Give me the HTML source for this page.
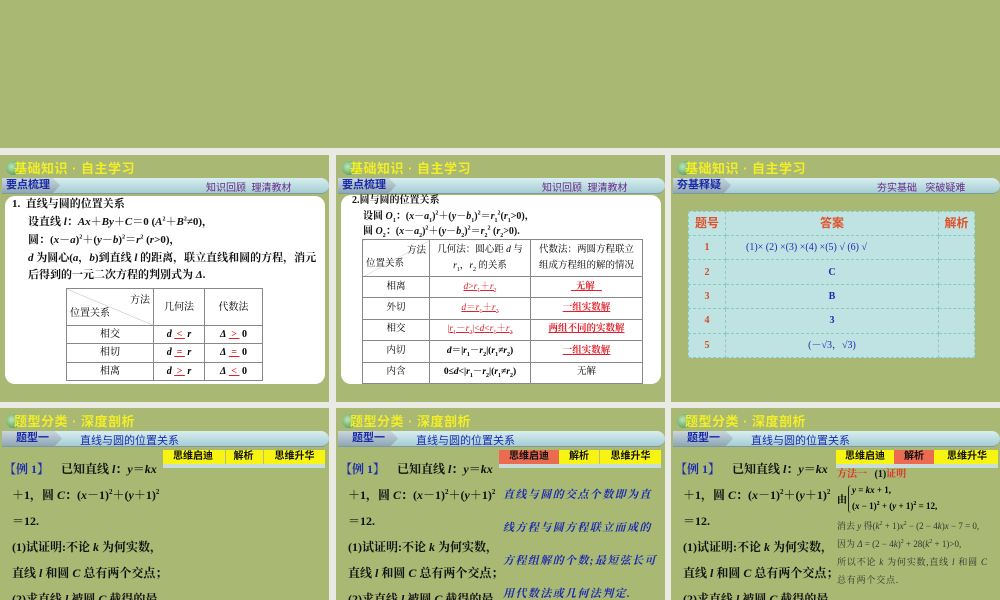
<!DOCTYPE html>
<html><head><meta charset="utf-8"><style>
*{margin:0;padding:0;box-sizing:border-box}
body{width:1000px;height:600px;background:#e9eae3;position:relative;overflow:hidden;font-family:"Liberation Serif","Noto Serif CJK SC",serif;}
sup,sub{line-height:0}
.a{position:absolute;white-space:nowrap;line-height:14px}
.s{position:absolute;background:#a9b872;overflow:hidden}
.ti{position:absolute;left:6px;top:3px;font:bold 13px "Liberation Sans","Noto Sans CJK SC",sans-serif;color:#f2ee27;letter-spacing:0.5px}
.ti i{display:inline-block;width:14px;height:14px;border-radius:50%;background:radial-gradient(circle at 40% 40%,#bfe6b0,#3b8a4a);vertical-align:-2px;margin-right:-6px}
.bar{position:absolute;left:2px;right:0;top:23px;height:16px;background:linear-gradient(#d8eef0,#a5cdd3);border-radius:0 9px 9px 0;border-bottom:1px solid #7d9aa0}
.tab{position:absolute;left:0;top:0;height:15px;width:58px;background:linear-gradient(#c9d6de,#8ea6b4);clip-path:polygon(0 0,88% 0,100% 50%,88% 100%,0 100%);font:bold 11px "Liberation Sans","Noto Sans CJK SC",sans-serif;color:#1a2aa8;padding-left:4px;line-height:15px}
.bt{position:absolute;top:1px;font:10px "Liberation Sans","Noto Sans CJK SC",sans-serif;color:#6a2a8a}
.box{position:absolute;left:5px;right:4px;background:#fff;border-radius:10px}
.tx{font-size:11px;font-weight:bold;color:#111}
table{border-collapse:collapse;position:absolute;font-size:10px;font-weight:bold}
td{border:1px solid #888;text-align:center;line-height:13px}
.r{color:#e0202a}
.bl{color:#1b2cb0}
.ts{font:11px "Liberation Sans","Noto Sans CJK SC",sans-serif;color:#1b2cb0}
.yb{position:absolute;top:42px;height:14px;background:#f7f312;font:bold 10px "Liberation Sans","Noto Sans CJK SC",sans-serif;color:#111;line-height:14px}
.yb span{position:absolute;top:0;text-align:center;height:14px}
.q{font-size:12px;font-weight:bold;color:#111}
</style></head><body>
<div class="s" style="left:0;top:0;width:1000px;height:148px"></div>

<!-- slide 1 -->
<div class="s" style="left:0;top:155px;width:329px;height:247px">
<div class="ti"><i></i>基础知识 · 自主学习</div>
<div class="bar"><div class="tab">要点梳理</div><div class="bt" style="left:204px">知识回顾&nbsp; 理清教材</div></div>
<div class="box" style="top:41px;height:188px"></div>
<div class="a tx" style="left:12px;top:42px">1.&nbsp; 直线与圆的位置关系</div>
<div class="a tx" style="left:28px;top:60px">设直线 <i>l</i>：<i>Ax</i>＋<i>By</i>＋<i>C</i>＝0 (<i>A</i><sup style="font-size:6px">2</sup>＋<i>B</i><sup style="font-size:6px">2</sup>≠0)，</div>
<div class="a tx" style="left:28px;top:78px">圆：(<i>x</i>－<i>a</i>)<sup style="font-size:6px">2</sup>＋(<i>y</i>－<i>b</i>)<sup style="font-size:6px">2</sup>＝<i>r</i><sup style="font-size:6px">2</sup> (<i>r</i>&gt;0)，</div>
<div class="a tx" style="left:28px;top:96px"><i>d</i> 为圆心(<i>a</i>，<i>b</i>)到直线 <i>l</i> 的距离，联立直线和圆的方程，消元</div>
<div class="a tx" style="left:28px;top:113px">后得到的一元二次方程的判别式为 <i>Δ</i>.</div>
<table style="left:66px;top:133px;width:197px;height:93px;background:#fff">
<tr style="height:37px"><td style="width:87px;text-align:left;font-weight:normal;padding:0 3px;background:linear-gradient(to top right,#fff 49.5%,#bbb 50%,#fff 51%)"><div style="text-align:right">方法</div><div>位置关系</div></td><td style="width:51px;font-weight:normal">几何法</td><td style="font-weight:normal">代数法</td></tr>
<tr><td style="font-weight:normal">相交</td><td><i>d</i> <u class="r">&nbsp;&lt;&nbsp;</u> <i>r</i></td><td><i>Δ</i> <u class="r">&nbsp;&gt;&nbsp;</u> 0</td></tr>
<tr><td style="font-weight:normal">相切</td><td><i>d</i> <u class="r">&nbsp;=&nbsp;</u> <i>r</i></td><td><i>Δ</i> <u class="r">&nbsp;=&nbsp;</u> 0</td></tr>
<tr><td style="font-weight:normal">相离</td><td><i>d</i> <u class="r">&nbsp;&gt;&nbsp;</u> <i>r</i></td><td><i>Δ</i> <u class="r">&nbsp;&lt;&nbsp;</u> 0</td></tr>
</table>
</div>

<!-- slide 2 -->
<div class="s" style="left:336px;top:155px;width:329px;height:247px">
<div class="ti"><i></i>基础知识 · 自主学习</div>
<div class="bar"><div class="tab">要点梳理</div><div class="bt" style="left:204px">知识回顾&nbsp; 理清教材</div></div>
<div class="box" style="top:40px;height:189px"></div>
<div class="a tx" style="left:16px;top:39px;font-size:10px">2.圆与圆的位置关系</div>
<div class="a tx" style="left:27px;top:55px;font-size:10px">设圆 <i>O</i><sub style="font-size:6px">1</sub>：(<i>x</i>－<i>a</i><sub style="font-size:6px">1</sub>)<sup style="font-size:6px">2</sup>＋(<i>y</i>－<i>b</i><sub style="font-size:6px">1</sub>)<sup style="font-size:6px">2</sup>＝<i>r</i><sub style="font-size:6px">1</sub><sup style="font-size:6px">2</sup>(<i>r</i><sub style="font-size:6px">1</sub>&gt;0)，</div>
<div class="a tx" style="left:27px;top:70px;font-size:10px">圆 <i>O</i><sub style="font-size:6px">2</sub>：(<i>x</i>－<i>a</i><sub style="font-size:6px">2</sub>)<sup style="font-size:6px">2</sup>＋(<i>y</i>－<i>b</i><sub style="font-size:6px">2</sub>)<sup style="font-size:6px">2</sup>＝<i>r</i><sub style="font-size:6px">2</sub><sup style="font-size:6px">2</sup> (<i>r</i><sub style="font-size:6px">2</sub>&gt;0).</div>
<table style="left:26px;top:84px;width:281px;height:145px;background:#fff;font-size:9.5px">
<tr style="height:37px"><td style="width:67px;font-weight:normal;text-align:left;padding:0 3px;background:linear-gradient(to bottom right,#fff 49.5%,#ccc 50%,#fff 51%)"><div style="text-align:right">方法</div><div>位置关系</div></td><td style="width:101px;font-weight:normal;line-height:16px">几何法：圆心距 <i>d</i> 与<br><i>r</i><sub style="font-size:6px">1</sub>，<i>r</i><sub style="font-size:6px">2</sub> 的关系</td><td style="font-weight:normal;line-height:16px">代数法：两圆方程联立<br>组成方程组的解的情况</td></tr>
<tr><td style="font-weight:normal">相离</td><td class="r" style="font-weight:normal"><u><i>d</i>&gt;<i>r</i><sub style="font-size:6px">1</sub>＋<i>r</i><sub style="font-size:6px">2</sub></u></td><td class="r"><u>&nbsp;&nbsp;无解&nbsp;&nbsp;&nbsp;</u></td></tr>
<tr><td style="font-weight:normal">外切</td><td class="r" style="font-weight:normal"><u><i>d</i>＝<i>r</i><sub style="font-size:6px">1</sub>＋<i>r</i><sub style="font-size:6px">2</sub></u></td><td class="r"><u>一组实数解</u></td></tr>
<tr><td style="font-weight:normal">相交</td><td class="r" style="font-weight:normal"><u>|<i>r</i><sub style="font-size:6px">1</sub>－<i>r</i><sub style="font-size:6px">2</sub>|&lt;<i>d</i>&lt;<i>r</i><sub style="font-size:6px">1</sub>＋<i>r</i><sub style="font-size:6px">2</sub></u></td><td class="r"><u>两组不同的实数解</u></td></tr>
<tr><td style="font-weight:normal">内切</td><td><i>d</i>＝|<i>r</i><sub style="font-size:6px">1</sub>－<i>r</i><sub style="font-size:6px">2</sub>|(<i>r</i><sub style="font-size:6px">1</sub>≠<i>r</i><sub style="font-size:6px">2</sub>)</td><td class="r"><u>一组实数解</u></td></tr>
<tr><td style="font-weight:normal">内含</td><td>0≤<i>d</i>&lt;|<i>r</i><sub style="font-size:6px">1</sub>－<i>r</i><sub style="font-size:6px">2</sub>|(<i>r</i><sub style="font-size:6px">1</sub>≠<i>r</i><sub style="font-size:6px">2</sub>)</td><td style="font-weight:normal">无解</td></tr>
</table>
</div>

<!-- slide 3 -->
<div class="s" style="left:671px;top:155px;width:329px;height:247px">
<div class="ti"><i></i>基础知识 · 自主学习</div>
<div class="bar"><div class="tab">夯基释疑</div><div class="bt" style="left:204px">夯实基础&nbsp;&nbsp; 突破疑难</div></div>
<table style="left:17px;top:56px;width:287px;height:147px;background:#bfe3e2;font-size:10px">
<tr style="height:24px;color:#e0502a;font:bold 12px 'Liberation Sans','Noto Sans CJK SC',sans-serif"><td style="width:37px;border:1px dashed #8cb">题号</td><td style="border:1px dashed #8cb">答案</td><td style="width:36px;border:1px dashed #8cb">解析</td></tr>
<tr><td style="border:1px dashed #8cb;color:#d0502a">1</td><td class="bl" style="border:1px dashed #8cb;font-weight:normal;text-align:left;padding-left:20px">(1)× (2) ×(3) ×(4) ×(5) √ (6) √</td><td style="border:1px dashed #8cb"></td></tr>
<tr><td style="border:1px dashed #8cb;color:#d0502a">2</td><td class="bl" style="border:1px dashed #8cb">C</td><td style="border:1px dashed #8cb"></td></tr>
<tr><td style="border:1px dashed #8cb;color:#d0502a">3</td><td class="bl" style="border:1px dashed #8cb">B</td><td style="border:1px dashed #8cb"></td></tr>
<tr><td style="border:1px dashed #8cb;color:#d0502a">4</td><td class="bl" style="border:1px dashed #8cb">3</td><td style="border:1px dashed #8cb"></td></tr>
<tr><td style="border:1px dashed #8cb;color:#d0502a">5</td><td class="bl" style="border:1px dashed #8cb;font-weight:normal">(－√3，√3)</td><td style="border:1px dashed #8cb"></td></tr>
</table>
</div>

<!-- row 2 -->
<div class="s" style="left:0;top:408px;width:329px;height:192px">
<div class="ti"><i></i>题型分类 · 深度剖析</div>
<div class="bar"><div class="tab" style="width:60px;padding-left:14px">题型一</div><div class="ts a" style="left:78px;top:1px">直线与圆的位置关系</div></div>
<div class="yb" style="left:163px;width:162px"><span style="left:0;width:60px">思维启迪</span><span style="left:62px;width:36px;border-left:1px solid #bb8">解析</span><span style="left:100px;width:62px;border-left:1px solid #bb8">思维升华</span></div>
<div class="a" style="left:163px;top:56px;width:162px;height:4px;background:#c9dcdc"></div>
<div class="a q" style="left:4px;top:54px"><span class="bl">【例 1】</span>&nbsp;&nbsp;&nbsp; 已知直线 <i>l</i>：<i>y</i>＝<i>kx</i></div>
<div class="a q" style="left:12px;top:80px">＋1，圆 <i>C</i>：(<i>x</i>－1)<sup style="font-size:7px">2</sup>＋(<i>y</i>＋1)<sup style="font-size:7px">2</sup></div>
<div class="a q" style="left:12px;top:106px">＝12.</div>
<div class="a q" style="left:12px;top:132px">(1)试证明:不论 <i>k</i> 为何实数，</div>
<div class="a q" style="left:12px;top:158px">直线 <i>l</i> 和圆 <i>C</i> 总有两个交点；</div>
<div class="a q" style="left:12px;top:184px">(2)求直线 <i>l</i> 被圆 <i>C</i> 截得的最</div>
</div>

<div class="s" style="left:336px;top:408px;width:329px;height:192px">
<div class="ti"><i></i>题型分类 · 深度剖析</div>
<div class="bar"><div class="tab" style="width:60px;padding-left:14px">题型一</div><div class="ts a" style="left:78px;top:1px">直线与圆的位置关系</div></div>
<div class="yb" style="left:163px;width:162px"><span style="left:0;width:60px;background:#ec6a50">思维启迪</span><span style="left:62px;width:36px">解析</span><span style="left:100px;width:62px;border-left:1px solid #bb8">思维升华</span></div>
<div class="a" style="left:163px;top:56px;width:162px;height:4px;background:#c9dcdc"></div>
<div class="a q" style="left:4px;top:54px"><span class="bl">【例 1】</span>&nbsp;&nbsp;&nbsp; 已知直线 <i>l</i>：<i>y</i>＝<i>kx</i></div>
<div class="a q" style="left:12px;top:80px">＋1，圆 <i>C</i>：(<i>x</i>－1)<sup style="font-size:7px">2</sup>＋(<i>y</i>＋1)<sup style="font-size:7px">2</sup></div>
<div class="a q" style="left:12px;top:106px">＝12.</div>
<div class="a q" style="left:12px;top:132px">(1)试证明:不论 <i>k</i> 为何实数，</div>
<div class="a q" style="left:12px;top:158px">直线 <i>l</i> 和圆 <i>C</i> 总有两个交点；</div>
<div class="a q" style="left:12px;top:184px">(2)求直线 <i>l</i> 被圆 <i>C</i> 截得的最</div>
<div class="a bl" style="left:167px;top:80px;font-size:11px;font-weight:bold;font-style:italic;letter-spacing:1.4px">直线与圆的交点个数即为直</div>
<div class="a bl" style="left:167px;top:113px;font-size:11px;font-weight:bold;font-style:italic;letter-spacing:1.4px">线方程与圆方程联立而成的</div>
<div class="a bl" style="left:167px;top:146px;font-size:11px;font-weight:bold;font-style:italic;letter-spacing:1.4px">方程组解的个数;最短弦长可</div>
<div class="a bl" style="left:167px;top:179px;font-size:11px;font-weight:bold;font-style:italic;letter-spacing:1.4px">用代数法或几何法判定.</div>
</div>

<div class="s" style="left:671px;top:408px;width:329px;height:192px">
<div class="ti"><i></i>题型分类 · 深度剖析</div>
<div class="bar"><div class="tab" style="width:60px;padding-left:14px">题型一</div><div class="ts a" style="left:78px;top:1px">直线与圆的位置关系</div></div>
<div class="yb" style="left:165px;width:162px"><span style="left:0;width:58px">思维启迪</span><span style="left:58px;width:40px;background:#ec6a50">解析</span><span style="left:100px;width:62px">思维升华</span></div>
<div class="a" style="left:165px;top:56px;width:162px;height:4px;background:#c9dcdc"></div>
<div class="a q" style="left:4px;top:54px"><span class="bl">【例 1】</span>&nbsp;&nbsp;&nbsp; 已知直线 <i>l</i>：<i>y</i>＝<i>kx</i></div>
<div class="a q" style="left:12px;top:80px">＋1，圆 <i>C</i>：(<i>x</i>－1)<sup style="font-size:7px">2</sup>＋(<i>y</i>＋1)<sup style="font-size:7px">2</sup></div>
<div class="a q" style="left:12px;top:106px">＝12.</div>
<div class="a q" style="left:12px;top:132px">(1)试证明:不论 <i>k</i> 为何实数，</div>
<div class="a q" style="left:12px;top:158px">直线 <i>l</i> 和圆 <i>C</i> 总有两个交点；</div>
<div class="a q" style="left:12px;top:184px">(2)求直线 <i>l</i> 被圆 <i>C</i> 截得的最</div>
<div class="a" style="left:166px;top:60px;font-size:10px;font-weight:bold;color:#e0302a">方法一&nbsp;&nbsp; <span style="color:#111">(1)</span>证明</div>
<div class="a" style="left:166px;top:86px;font-size:10px;font-weight:bold">由</div>
<div class="a" style="left:177px;top:77px;width:4px;height:28px;border-left:1px solid #222;border-radius:3px 0 0 3px"></div>
<div class="a" style="left:181px;top:75px;font-size:9px;font-weight:bold"><i>y</i> = <i>kx</i> + 1,</div>
<div class="a" style="left:181px;top:91px;font-size:9px;font-weight:bold">(<i>x</i> − 1)<sup style="font-size:6px">2</sup> + (<i>y</i> + 1)<sup style="font-size:6px">2</sup> = 12,</div>
<div class="a" style="left:166px;top:111px;font-size:9px;color:#333">消去 <i>y</i> 得(<i>k</i><sup style="font-size:6px">2</sup> + 1)<i>x</i><sup style="font-size:6px">2</sup> − (2 − 4<i>k</i>)<i>x</i> − 7 = 0,</div>
<div class="a" style="left:166px;top:129px;font-size:9px;color:#333">因为 <i>Δ</i> = (2 − 4<i>k</i>)<sup style="font-size:6px">2</sup> + 28(<i>k</i><sup style="font-size:6px">2</sup> + 1)&gt;0,</div>
<div class="a" style="left:166px;top:147px;font-size:9px;color:#333;letter-spacing:0.8px">所以不论 <i>k</i> 为何实数,直线 <i>l</i> 和圆 <i>C</i></div>
<div class="a" style="left:166px;top:165px;font-size:9px;color:#333;letter-spacing:0.8px">总有两个交点.</div>
</div>
</body></html>
